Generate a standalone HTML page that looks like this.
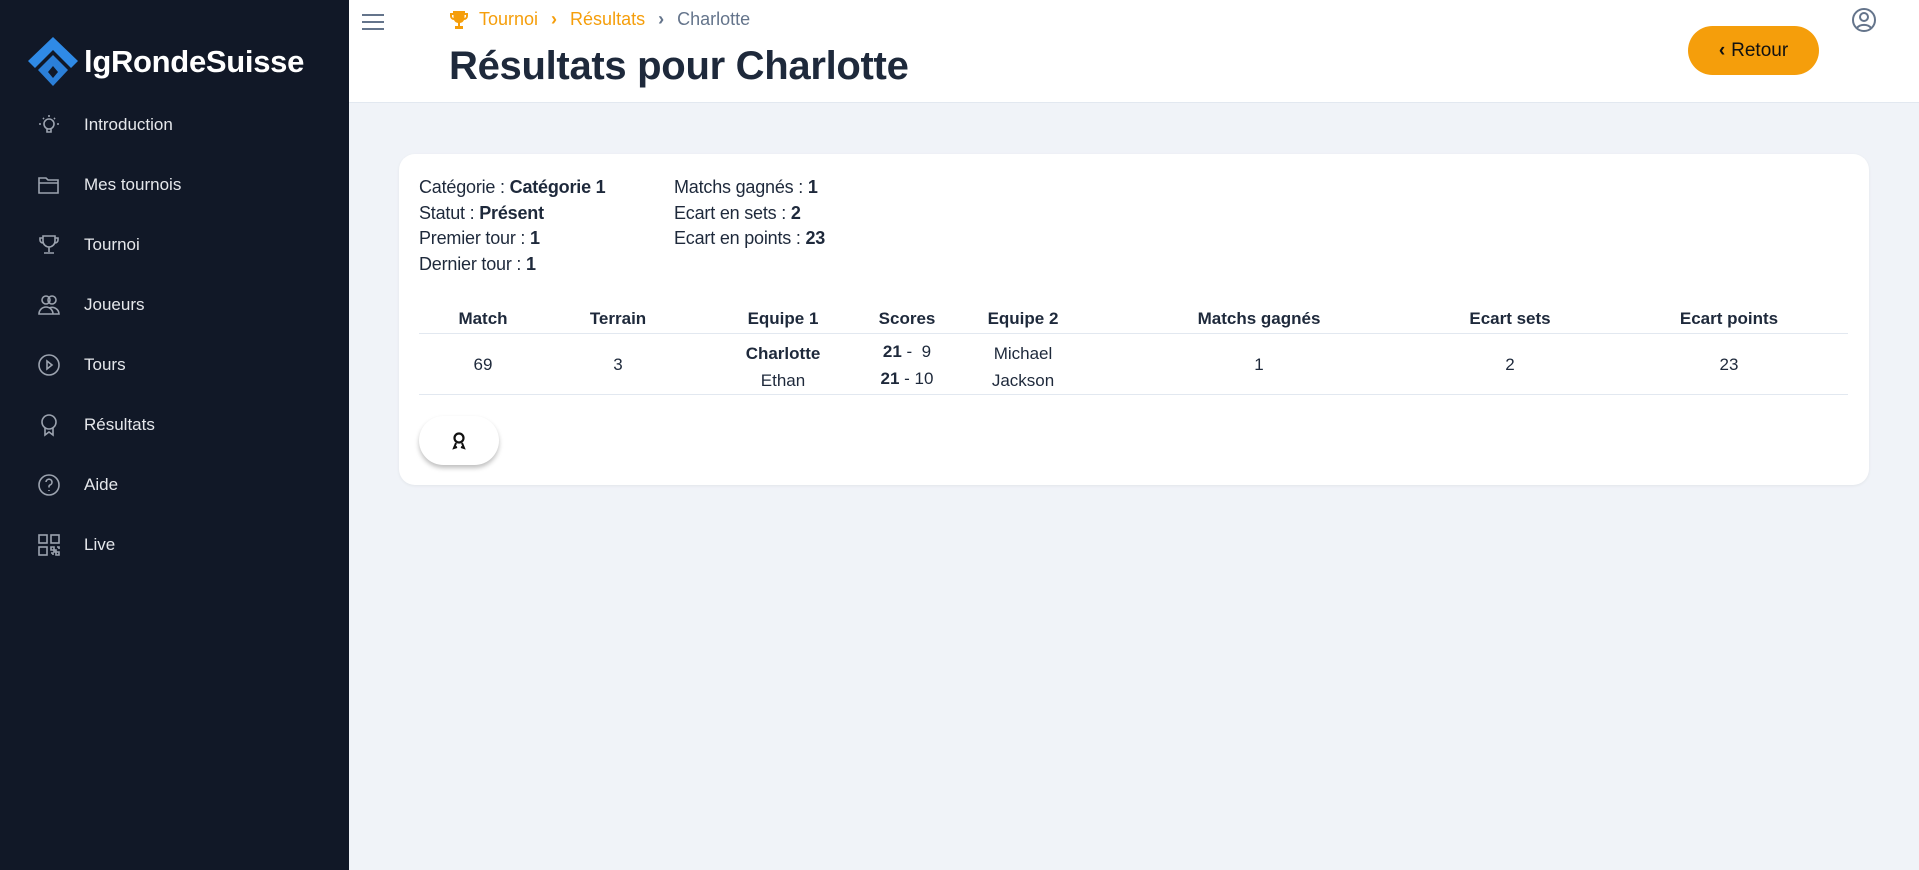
<!DOCTYPE html>
<html><head><meta charset="utf-8"><style>
*{box-sizing:border-box;margin:0;padding:0}
body{width:1919px;height:870px;overflow:hidden;background:#f0f3f8;font-family:"Liberation Sans",sans-serif;position:relative;color:#1e293b}
.sb{position:absolute;left:0;top:0;width:349px;height:870px;background:#111827}
.logo{position:absolute;left:84px;top:44px;color:#fff;font-size:31px;font-weight:bold;letter-spacing:-0.3px}
.nav{position:absolute;left:0;width:349px;height:30px;color:#e5e7eb;font-size:17px}
.nav svg{position:absolute;left:37px;top:3px}
.nav span{position:absolute;left:84px;top:5px}
.hdr{position:absolute;left:349px;top:0;right:0;height:103px;background:#fff;border-bottom:1px solid #e2e8f0}
.card{position:absolute;left:399px;top:154px;width:1470px;height:331px;background:#fff;border-radius:16px;box-shadow:0 1px 3px rgba(0,0,0,.06)}
.info{position:absolute;font-size:18px;line-height:25.5px;color:#1e293b;letter-spacing:-0.2px}
.c{position:absolute;text-align:center;transform:translateX(-50%);font-size:17px;white-space:nowrap}
.h{font-weight:bold;top:155px}
.line{position:absolute;left:20px;width:1429px;height:1px;background:#e2e8f0}
</style></head><body>
<div class="sb">
<svg style="position:absolute;left:0;top:0" width="90" height="90">
<polygon points="53,37 78,61 71,68 53,50 35,68 28,61" fill="#2f8ae6"/>
<polygon points="53,55 68,70 53,86 38,70" fill="#2b7fd8"/>
<polygon points="53,66 58,72 53,78 48,72" fill="#111827"/>
</svg>
<div class="logo">lgRondeSuisse</div>
<div class="nav" style="top:110px"><svg width="24" height="24" fill="none" stroke="#9ca3af" stroke-width="1.6"><circle cx="12" cy="11" r="5"/><path d="M10 16v3h4v-3M12 2v2M4 11H2M22 11h-2M6 5l1 1M18 5l-1 1"/></svg><span>Introduction</span></div>
<div class="nav" style="top:170px"><svg width="24" height="24" fill="none" stroke="#9ca3af" stroke-width="1.6"><path d="M2 5h7l2 2h10v13H2zM2 10h19"/></svg><span>Mes tournois</span></div>
<div class="nav" style="top:230px"><svg width="24" height="24" fill="none" stroke="#9ca3af" stroke-width="1.6"><path d="M6 3h12v5a6 6 0 0 1-12 0zM6 5H3v2a3 3 0 0 0 3 3M18 5h3v2a3 3 0 0 1-3 3M12 14v5M7 20h10"/></svg><span>Tournoi</span></div>
<div class="nav" style="top:290px"><svg width="24" height="24" fill="none" stroke="#9ca3af" stroke-width="1.6"><circle cx="9" cy="7" r="4"/><circle cx="15" cy="7" r="4"/><path d="M2 21a7 7 0 0 1 14 0zM12 15a7 7 0 0 1 10 6h-6"/></svg><span>Joueurs</span></div>
<div class="nav" style="top:350px"><svg width="24" height="24" fill="none" stroke="#9ca3af" stroke-width="1.6"><circle cx="12" cy="12" r="10"/><path d="M10 8l5 4-5 4z"/></svg><span>Tours</span></div>
<div class="nav" style="top:410px"><svg width="24" height="24" fill="none" stroke="#9ca3af" stroke-width="1.6"><circle cx="12" cy="9" r="7"/><path d="M8 15v7l4-3 4 3v-7"/></svg><span>Résultats</span></div>
<div class="nav" style="top:470px"><svg width="24" height="24" fill="none" stroke="#9ca3af" stroke-width="1.6"><circle cx="12" cy="12" r="10"/><path d="M9 9a3 3 0 1 1 4 3c-1 .5-1 1-1 2.5M12 17v1"/></svg><span>Aide</span></div>
<div class="nav" style="top:530px"><svg width="24" height="24" fill="none" stroke="#9ca3af" stroke-width="1.6"><rect x="2" y="2" width="8" height="8"/><rect x="14" y="2" width="8" height="8"/><rect x="2" y="14" width="8" height="8"/><path d="M14 14h3v3h-3zM19 19h3v3h-3zM17 17h2v2h-2zM20 14h2v2M14 20h2v2"/></svg><span>Live</span></div>
</div>
<div class="hdr">
<svg style="position:absolute;left:12px;top:12px" width="24" height="20" stroke="#64748b" stroke-width="2"><path d="M1 3h22M1 10h22M1 17h22"/></svg>
<svg style="position:absolute;left:100px;top:10px" width="20" height="20" fill="#f59e0b"><path d="M4 1h12v2h3v3a4 4 0 0 1-4 4 5 5 0 0 1-4 3v3h3v3H6v-3h3v-3a5 5 0 0 1-4-3 4 4 0 0 1-4-4V3h3zM3 5v1a2 2 0 0 0 1.5 2V5zM17 5h-1.5v3A2 2 0 0 0 17 6z"/></svg>
<div style="position:absolute;left:130px;top:9px;font-size:18px;color:#f59e0b">Tournoi <span style="margin:0 8px;font-weight:bold">›</span> Résultats <span style="margin:0 8px;font-weight:bold;color:#64748b">›</span> <span style="color:#64748b">Charlotte</span></div>
<div style="position:absolute;left:100px;top:44px;font-size:40px;font-weight:bold;color:#1e293b;letter-spacing:-0.3px">Résultats pour Charlotte</div>
<div style="position:absolute;left:1339px;top:26px;width:131px;height:49px;border-radius:25px;background:#f59e0b;color:#111;font-size:19px;line-height:49px;text-align:center"><b style="margin-right:6px">‹</b>Retour</div>
<svg style="position:absolute;left:1502px;top:7px" width="26" height="26" fill="none" stroke="#64748b" stroke-width="2"><circle cx="13" cy="13" r="11"/><circle cx="13" cy="10" r="4"/><path d="M6 21a8 6 0 0 1 14 0"/></svg>
</div>
<div class="card">
<div class="info" style="left:20px;top:21px">Catégorie : <b>Catégorie 1</b><br>Statut : <b>Présent</b><br>Premier tour : <b>1</b><br>Dernier tour : <b>1</b></div>
<div class="info" style="left:275px;top:21px">Matchs gagnés : <b>1</b><br>Ecart en sets : <b>2</b><br>Ecart en points : <b>23</b></div>
<div class="c h" style="left:84px">Match</div>
<div class="c h" style="left:219px">Terrain</div>
<div class="c h" style="left:384px">Equipe 1</div>
<div class="c h" style="left:508px">Scores</div>
<div class="c h" style="left:624px">Equipe 2</div>
<div class="c h" style="left:860px">Matchs gagnés</div>
<div class="c h" style="left:1111px">Ecart sets</div>
<div class="c h" style="left:1330px">Ecart points</div>
<div class="line" style="top:179px"></div>
<div class="c" style="left:84px;top:201px">69</div>
<div class="c" style="left:219px;top:201px">3</div>
<div class="c" style="left:384px;top:186px;line-height:27px"><b>Charlotte</b><br>Ethan</div>
<div class="c" style="left:508px;top:184px;line-height:27px"><b>21</b> -&nbsp; 9<br><b>21</b> - 10</div>
<div class="c" style="left:624px;top:186px;line-height:27px">Michael<br>Jackson</div>
<div class="c" style="left:860px;top:201px">1</div>
<div class="c" style="left:1111px;top:201px">2</div>
<div class="c" style="left:1330px;top:201px">23</div>
<div class="line" style="top:240px"></div>
<div style="position:absolute;left:20px;top:262px;width:80px;height:49px;border-radius:25px;background:#fff;box-shadow:0 3px 5px rgba(0,0,0,.25)">
<svg style="position:absolute;left:32px;top:15px" width="16" height="20" fill="none" stroke="#111" stroke-width="2.2"><circle cx="8" cy="7" r="4.5"/><path d="M5 12l-2 5 3-1M11 12l2 5-3-1" stroke-width="2"/></svg>
</div>
</div>
</body></html>
